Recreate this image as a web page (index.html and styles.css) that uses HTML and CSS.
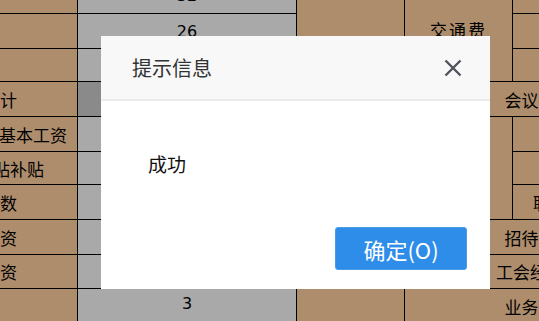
FILE: index.html
```html
<!DOCTYPE html>
<html lang="zh-CN">
<head>
<meta charset="utf-8">
<title>提示信息</title>
<link rel="stylesheet" href="styles.css">
</head>
<body>
<div class="sheet">
  <div class="cell tan"></div>
  <div class="cell gray num">32</div>
  <div class="cell tan span-c"></div>
  <div class="cell tan span-d3 wide">交通费</div>
  <div class="cell tan"></div>

  <div class="cell tan"></div>
  <div class="cell gray num">26</div>
  <div class="cell tan"></div>

  <div class="cell tan"></div>
  <div class="cell gray"></div>
  <div class="cell tan"></div>

  <div class="cell tan lbl i44">合计</div>
  <div class="cell dark"></div>
  <div class="cell tan span-de">会议费</div>

  <div class="cell tan lbl i60">基本工资</div>
  <div class="cell gray"></div>
  <div class="cell tan span-d3"></div>
  <div class="cell tan"></div>

  <div class="cell tan lbl i37">津贴补贴</div>
  <div class="cell gray"></div>
  <div class="cell tan"></div>

  <div class="cell tan lbl i44">人数</div>
  <div class="cell gray"></div>
  <div class="cell tan">职工教育经费</div>

  <div class="cell tan lbl i44">工资</div>
  <div class="cell gray"></div>
  <div class="cell tan span-de">招待费</div>

  <div class="cell tan lbl i44">工资</div>
  <div class="cell gray"></div>
  <div class="cell tan span-de">工会经费</div>

  <div class="cell tan"></div>
  <div class="cell gray num last">3</div>
  <div class="cell tan"></div>
  <div class="cell tan span-de last">业务费</div>
</div>

<div class="dialog">
  <div class="dlg-head">
    <span class="dlg-title">提示信息</span>
    <svg class="dlg-close" width="18" height="18" viewBox="0 0 18 18">
      <path d="M1.5 1.5 L16.5 16.5 M16.5 1.5 L1.5 16.5" stroke="#50535c" stroke-width="2.4" fill="none"/>
    </svg>
  </div>
  <div class="dlg-body">成功</div>
  <div class="dlg-foot">
    <button class="btn">确定(O)</button>
  </div>
</div>
</body>
</html>
```

FILE: styles.css
```css
html, body {
  margin: 0;
  height: 321px;
  overflow: hidden;
}
body {
  position: relative;
  background: #ad8c6c;
  font-family: "Noto Sans CJK SC", "Noto Sans", sans-serif;
}
.sheet {
  display: grid;
  grid-template-columns: 138px 218px 107px 107px 142px;
  grid-template-rows: 35px 34px 32px 34px 34px 32px 34px 34px 33px 40px;
  gap: 1px;
  background: #000;
  margin: -22px 0 0 -61px;
  width: 716px;
  font-size: 17px;
  color: #000;
}
.cell {
  display: flex;
  align-items: center;
  justify-content: center;
  white-space: nowrap;
  overflow: hidden;
}
.tan { background: #ae8d6d; }
.gray { background: #a9a9a9; }
.dark { background: #8a8a8a; }
.num { font-size: 16px; font-family: "DejaVu Sans", sans-serif; }
.last { align-items: flex-start; padding-top: 5px; }
.span-c { grid-row: span 9; }
.span-d3 { grid-row: span 3; }
.span-de { grid-column: span 2; }
.wide { letter-spacing: 2px; }
.lbl { justify-content: flex-start; }
.i37 { padding-left: 37px; }
.i44 { padding-left: 44px; }
.i60 { padding-left: 60px; }

.dialog {
  position: absolute;
  left: 101px;
  top: 36px;
  width: 389px;
  background: #fff;
  display: flex;
  flex-direction: column;
}
.dlg-head {
  height: 63px;
  background: #f8f8f8;
  border-bottom: 2px solid #ebebeb;
  display: flex;
  align-items: center;
  justify-content: space-between;
  padding: 0 28px 0 31px;
}
.dlg-title {
  font-size: 20px;
  color: #333;
}
.dlg-close { display: block; }
.dlg-body {
  padding: 51px 20px 0 47px;
  font-size: 19px;
  line-height: 24px;
  color: #111;
}
.dlg-foot {
  display: flex;
  justify-content: flex-end;
  padding: 51px 23px 19px;
}
.btn {
  width: 132px;
  height: 43px;
  background: #2e8de9;
  border: 1px solid #4a9de2;
  border-radius: 3px;
  color: #fff;
  font-family: "Noto Sans CJK SC", "Noto Sans", sans-serif;
  font-size: 22px;
  padding: 0;
  line-height: 1;
}
```
